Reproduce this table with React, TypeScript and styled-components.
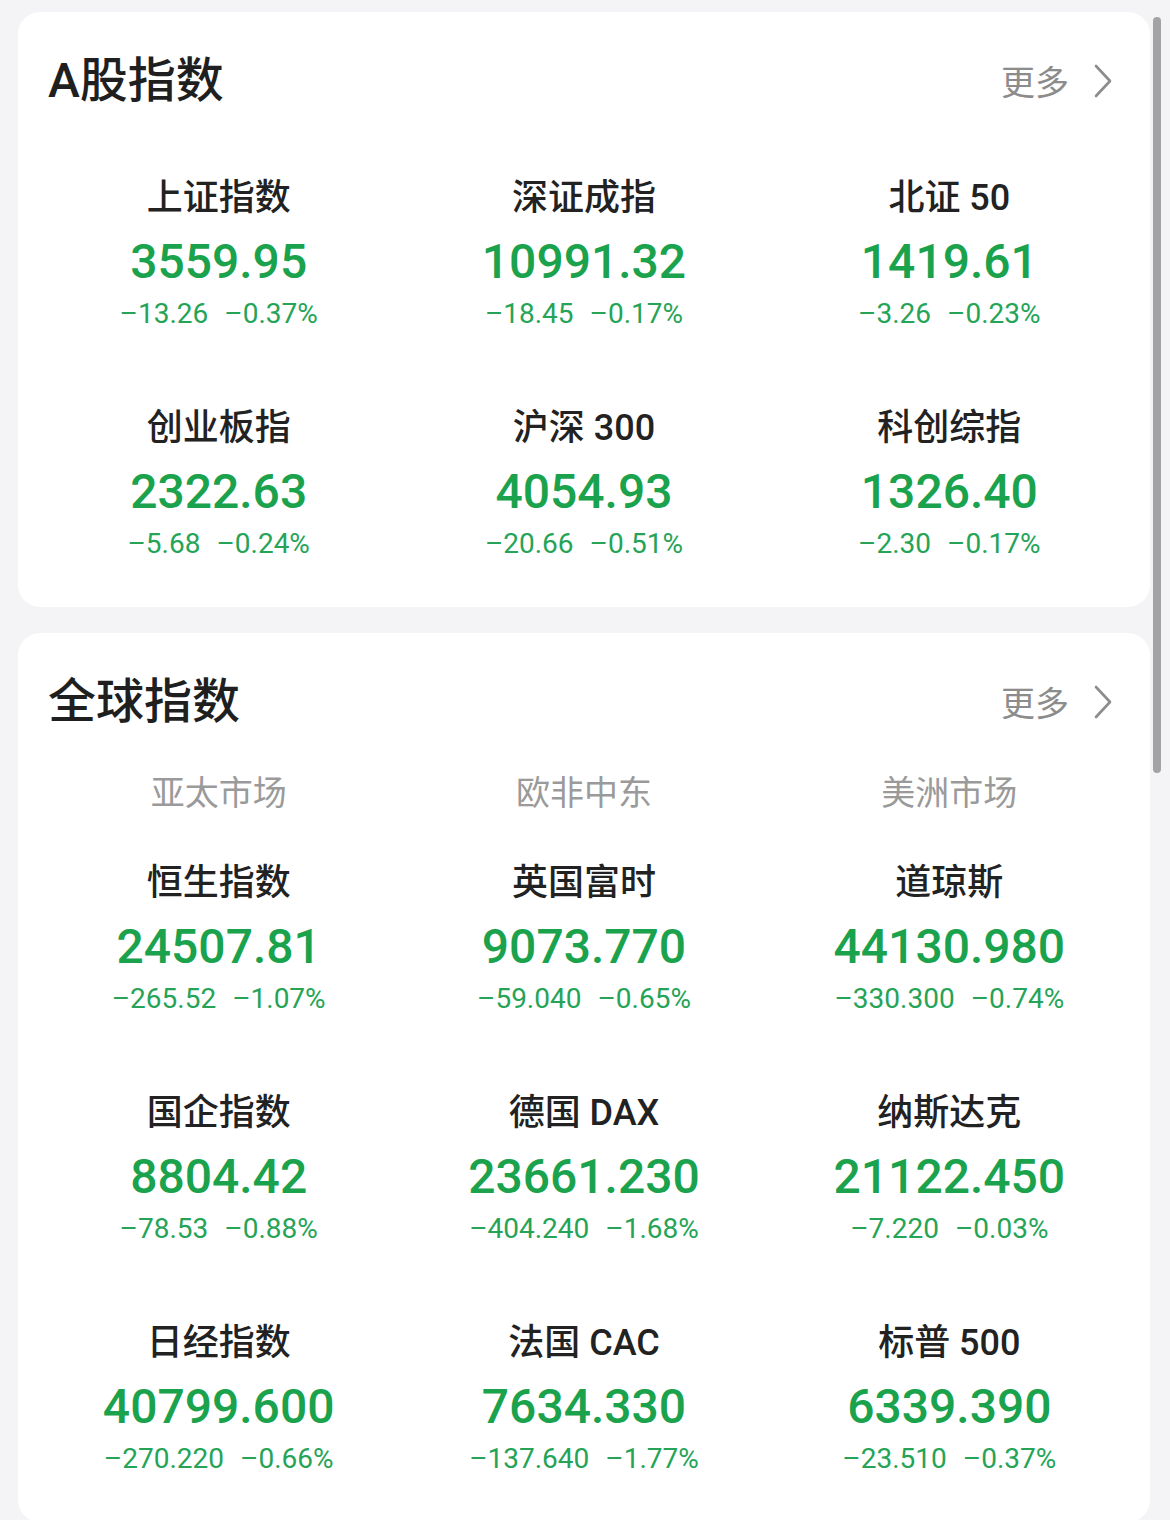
import React from "react";
import styled, { createGlobalStyle } from "styled-components";

const Global = createGlobalStyle`
  html, body {
    margin: 0;
    padding: 0;
    background: #f4f4f6;
    overflow: hidden;
  }
  body {
    font-family: Roboto, "Noto Sans CJK SC", sans-serif;
  }
`;

const Page = styled.div`
  position: relative;
  width: 1170px;
  height: 1520px;
  box-sizing: border-box;
  padding: 12px 20px 0 18px;
  display: flex;
  flex-direction: column;
  gap: 26px;
  overflow: hidden;
`;

const Card = styled.section`
  background: #ffffff;
  border-radius: 22px;
  padding: 41px 18px 43px;
  display: flex;
  flex-direction: column;
`;

const Header = styled.div`
  height: 56px;
  display: flex;
  align-items: center;
  justify-content: space-between;
  padding: 0 19px 0 12px;
`;

const Title = styled.h2`
  margin: 0;
  font-family: Roboto, "Noto Sans CJK SC", sans-serif;
  font-size: 48px;
  font-weight: 500;
  color: #1f1f1f;
  line-height: 56px;
`;

const More = styled.div`
  display: flex;
  align-items: center;
  gap: 24px;
  font-family: "Noto Sans CJK SC", sans-serif;
  font-size: 34px;
  color: #8c8c8c;
  line-height: 44px;
`;

const Tabs = styled.div`
  display: grid;
  grid-template-columns: repeat(3, 1fr);
  margin-top: 39px;
`;

const Tab = styled.div`
  text-align: center;
  font-family: "Noto Sans CJK SC", sans-serif;
  font-size: 34px;
  line-height: 44px;
  color: #9a9a9a;
`;

const Grid = styled.div<{ $top: number }>`
  display: grid;
  grid-template-columns: repeat(3, 1fr);
  row-gap: 72px;
  margin-top: ${(p) => p.$top}px;
`;

const Cell = styled.div`
  display: flex;
  flex-direction: column;
  align-items: center;
`;

const Name = styled.div`
  font-family: Roboto, "Noto Sans CJK SC", sans-serif;
  font-size: 36px;
  font-weight: 500;
  line-height: 44px;
  color: #222222;
  white-space: nowrap;
`;

const Value = styled.div`
  margin-top: 12px;
  font-family: Roboto, sans-serif;
  font-size: 48px;
  font-weight: 500;
  line-height: 60px;
  color: #1ba24d;
  white-space: nowrap;
`;

const Change = styled.div`
  margin-top: 2px;
  display: flex;
  gap: 16px;
  font-family: Roboto, sans-serif;
  font-size: 28px;
  line-height: 40px;
  color: #25a457;
  white-space: nowrap;
`;

const Scrollbar = styled.div`
  position: absolute;
  left: 1153px;
  top: 17px;
  width: 8px;
  height: 756px;
  border-radius: 4px;
  background: #a3a3a3;
`;

type Item = { name: string; value: string; chg: string; pct: string };

const aShares: Item[] = [
  { name: "上证指数", value: "3559.95", chg: "–13.26", pct: "–0.37%" },
  { name: "深证成指", value: "10991.32", chg: "–18.45", pct: "–0.17%" },
  { name: "北证 50", value: "1419.61", chg: "–3.26", pct: "–0.23%" },
  { name: "创业板指", value: "2322.63", chg: "–5.68", pct: "–0.24%" },
  { name: "沪深 300", value: "4054.93", chg: "–20.66", pct: "–0.51%" },
  { name: "科创综指", value: "1326.40", chg: "–2.30", pct: "–0.17%" },
];

const globalIdx: Item[] = [
  { name: "恒生指数", value: "24507.81", chg: "–265.52", pct: "–1.07%" },
  { name: "英国富时", value: "9073.770", chg: "–59.040", pct: "–0.65%" },
  { name: "道琼斯", value: "44130.980", chg: "–330.300", pct: "–0.74%" },
  { name: "国企指数", value: "8804.42", chg: "–78.53", pct: "–0.88%" },
  { name: "德国 DAX", value: "23661.230", chg: "–404.240", pct: "–1.68%" },
  { name: "纳斯达克", value: "21122.450", chg: "–7.220", pct: "–0.03%" },
  { name: "日经指数", value: "40799.600", chg: "–270.220", pct: "–0.66%" },
  { name: "法国 CAC", value: "7634.330", chg: "–137.640", pct: "–1.77%" },
  { name: "标普 500", value: "6339.390", chg: "–23.510", pct: "–0.37%" },
];

const Chevron = () => (
  <svg width="20" height="34" viewBox="0 0 20 34" fill="none">
    <polyline
      points="3,2 17,17 3,32"
      stroke="#8c8c8c"
      strokeWidth="2.6"
      strokeLinecap="round"
      strokeLinejoin="round"
    />
  </svg>
);

const IndexCell = ({ item }: { item: Item }) => (
  <Cell>
    <Name>{item.name}</Name>
    <Value>{item.value}</Value>
    <Change>
      <span>{item.chg}</span>
      <span>{item.pct}</span>
    </Change>
  </Cell>
);

const SectionHeader = ({ title }: { title: string }) => (
  <Header>
    <Title>{title}</Title>
    <More>
      <span>更多</span>
      <Chevron />
    </More>
  </Header>
);

export default function App() {
  return (
    <>
      <Global />
      <Page>
        <Card>
          <SectionHeader title="A股指数" />
          <Grid $top={67}>
            {aShares.map((it) => (
              <IndexCell key={it.name} item={it} />
            ))}
          </Grid>
        </Card>
        <Card>
          <SectionHeader title="全球指数" />
          <Tabs>
            <Tab>亚太市场</Tab>
            <Tab>欧非中东</Tab>
            <Tab>美洲市场</Tab>
          </Tabs>
          <Grid $top={48}>
            {globalIdx.map((it) => (
              <IndexCell key={it.name} item={it} />
            ))}
          </Grid>
        </Card>
        <Scrollbar />
      </Page>
    </>
  );
}
